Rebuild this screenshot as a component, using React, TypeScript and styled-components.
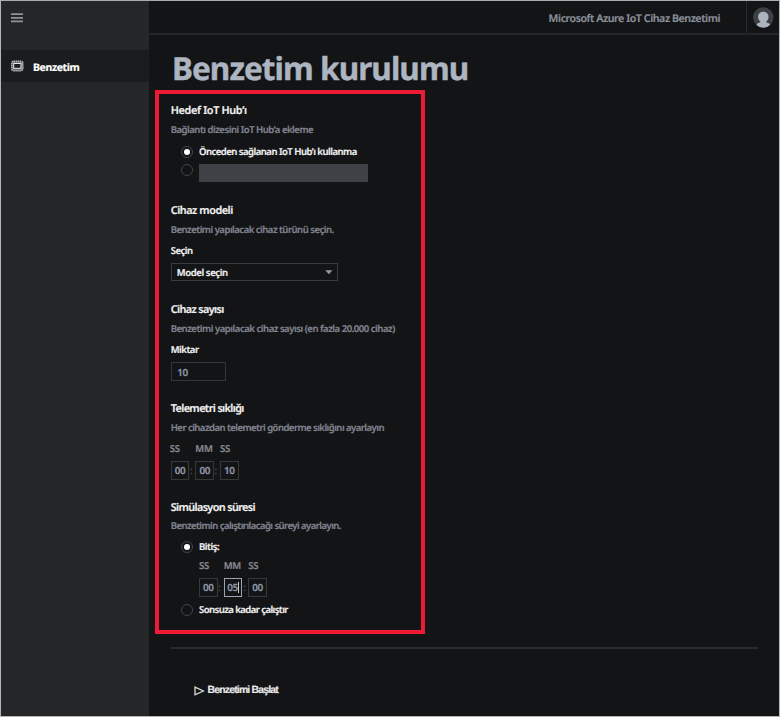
import React from "react";
import styled, { createGlobalStyle } from "styled-components";

const Global = createGlobalStyle`
  * { box-sizing: border-box; }
  body { margin: 0; background: #131416; }
`;

const Shell = styled.div`
  display: grid;
  grid-template-columns: 148px 1fr;
  width: 780px;
  height: 717px;
  border: 1px solid #b4b5b6;
  border-top-color: #a9abac;
  background: #131416;
  color: #f1f1f1;
  font-family: "Noto Sans", "Open Sans", sans-serif;
  font-weight: 600;
  text-rendering: geometricPrecision;
  -webkit-text-stroke: 0.2px currentColor;
  overflow: hidden;
`;

const Sidebar = styled.nav`
  display: flex;
  flex-direction: column;
  background: #252628;
`;

const MenuButton = styled.div`
  height: 49px;
  padding: 12px 0 0 10px;
  svg { display: block; }
`;

const NavItem = styled.div`
  display: flex;
  align-items: center;
  gap: 9px;
  height: 32px;
  padding: 4px 0 0 10px;
  background: #1b1c1e;
  font-size: 10.5px;
  font-weight: 700;
  letter-spacing: -0.38px;
  line-height: 28px;
  color: #fff;
  svg { flex: none; margin-top: -5px; }
`;

const Main = styled.main`
  display: flex;
  flex-direction: column;
  min-width: 0;
`;

const TopBar = styled.header`
  display: flex;
  justify-content: flex-end;
  height: 34px;
  flex: none;
  border-bottom: 2px solid #242527;
`;

const ProductName = styled.div`
  padding: 1px 26px 0 0;
  font-size: 10.6px;
  letter-spacing: -0.41px;
  line-height: 34px;
  color: #8b919b;
  white-space: nowrap;
`;

const Account = styled.div`
  width: 33px;
  padding: 6px 0 0 6px;
  border-left: 1px solid #2b2c2e;
  svg { display: block; }
`;

const Title = styled.h1`
  height: 55px;
  margin: 0;
  padding-left: 23px;
  font-size: 31.5px;
  font-weight: 700;
  letter-spacing: -0.94px;
  line-height: 67px;
  color: #acb5c0;
  -webkit-text-stroke-width: 0.4px;
  white-space: nowrap;
`;

const Frame = styled.div`
  width: 270px;
  height: 544px;
  flex: none;
  margin-left: 6px;
  padding: 8px 0 0 11.7px;
  border: 4px solid #ee1a35;
`;

const Section = styled.section<{ $height: number }>`
  height: ${(p) => p.$height}px;
`;

const Heading = styled.h2<{ $track: number }>`
  margin: 0;
  font-size: 10.8px;
  font-weight: 600;
  line-height: 18px;
  letter-spacing: ${(p) => p.$track}px;
  white-space: nowrap;
`;

const Text = styled.p<{ $track: number; $muted?: boolean; $height?: number }>`
  margin: 0;
  height: ${(p) => p.$height ?? 20}px;
  font-size: 9.5px;
  line-height: ${(p) => p.$height ?? 20}px;
  letter-spacing: ${(p) => p.$track}px;
  color: ${(p) => (p.$muted ? "#80838f" : "#f1f1f1")};
  white-space: nowrap;
`;

const Option = styled.div<{ $height: number }>`
  display: grid;
  grid-template-columns: 12px auto;
  column-gap: 6.1px;
  justify-content: start;
  align-items: center;
  height: ${(p) => p.$height}px;
  padding-left: 10.2px;
`;

const Radio = styled.span<{ $raised?: boolean }>`
  display: grid;
  place-items: center;
  width: 12px;
  height: 12px;
  margin-top: ${(p) => (p.$raised ? -6 : 0)}px;
  border: 1px solid #434548;
  border-radius: 50%;
`;

const Dot = styled.span`
  width: 6px;
  height: 6px;
  border-radius: 50%;
  background: #fff;
`;

const HiddenString = styled.div`
  width: 169px;
  height: 18px;
  background: #3e4145;
`;

const Select = styled.div`
  display: flex;
  align-items: center;
  justify-content: space-between;
  width: 167.6px;
  height: 18px;
  margin-top: 1px;
  padding: 2px 4.5px 0 5px;
  border: 1px solid #3a3b3d;
  svg { margin-top: -2px; }
`;

const Quantity = styled.div`
  width: 55.6px;
  height: 19px;
  margin-top: 1px;
  padding-left: 5.5px;
  border: 1px solid #343537;
  font-size: 9.9px;
  letter-spacing: -0.35px;
  line-height: 18px;
  color: #8f98a8;
`;

const TimeGrid = styled.div<{ $indent: number; $top: number }>`
  display: grid;
  grid-template-columns: repeat(3, 18.65px);
  column-gap: 6px;
  row-gap: 3px;
  margin: ${(p) => p.$top}px 0 0 ${(p) => p.$indent}px;
`;

const Unit = styled.div<{ $shift?: number }>`
  margin-left: ${(p) => p.$shift ?? 0}px;
  font-size: 9.6px;
  letter-spacing: -0.25px;
  line-height: 18px;
  color: #858790;
  white-space: nowrap;
`;

const TimeBox = styled.div<{ $active?: boolean }>`
  display: flex;
  align-items: center;
  justify-content: center;
  height: 19px;
  border: 1px solid ${(p) => (p.$active ? "#98a4b0" : "#37383a")};
  font-size: 9.9px;
  letter-spacing: -0.4px;
  line-height: 17px;
  color: #8f98a8;
  &:not(:last-child)::after {
    content: ":";
    width: 0;
    position: relative;
    left: 4.5px;
    color: #424346;
  }
`;

const Caret = styled.span`
  width: 1px;
  height: 11px;
  background: #c4cbd4;
`;

const Divider = styled.hr`
  width: 587px;
  height: 2px;
  margin: 13px 0 0 21.7px;
  border: 0;
  background: #2a2b2d;
`;

const StartButton = styled.div`
  display: flex;
  align-items: center;
  gap: 2.5px;
  margin: 32px 0 0 45px;
  font-family: "Liberation Sans", Arial, sans-serif;
  font-size: 10.4px;
  font-weight: 700;
  letter-spacing: -0.79px;
  line-height: 20px;
  color: #e8e8e8;
  svg { margin-top: -1px; }
`;

const MenuIcon = () => (
  <svg width="12" height="10" viewBox="0 0 12 10" stroke="#8d9297" strokeWidth="1.8">
    <path d="M0 1.2h12M0 4.8h12M0 8.4h12" />
  </svg>
);

const ChipIcon = () => (
  <svg width="13" height="12" viewBox="0 0 13 12" fill="none">
    <rect x=".9" y="1.3" width="10.8" height="9.2" rx="1.8" stroke="#b9b9b9" strokeWidth="1.8" strokeDasharray="1.5 .5" />
    <rect x="1.6" y="2" width="9.4" height="7.8" rx="1" fill="#777" />
    <rect x="2.7" y="3.5" width="7.2" height="4.8" fill="#1b1c1e" stroke="#e4e4e4" strokeWidth="1" />
  </svg>
);

const AvatarIcon = () => (
  <svg width="21" height="21" viewBox="0 0 21 21">
    <circle cx="10.3" cy="10.5" r="10.2" fill="#3d4044" />
    <path d="M10.3 4.800C7.100 4.800 5.100 7 5.100 9.900c0 2.200 1 3.700 2.300 4.500v.8C5.400 15.600 4 16.500 3.500 18.100a10.200 10.200 0 0 0 13.600 0C16.600 16.500 15.200 15.600 13.200 15.200v-.8c1.300-.8 2.300-2.300 2.300-4.500 0-2.900-2-5.100-5.200-5.100Z" fill="#acb5be" />
  </svg>
);

const PlayIcon = () => (
  <svg width="11" height="10" viewBox="0 0 11 10" fill="none" stroke="#dcdcdc" strokeWidth="1.3">
    <path d="M1 1.2 9.5 5 1 8.8Z" />
  </svg>
);

const ArrowIcon = () => (
  <svg width="8" height="5" viewBox="0 0 8 5">
    <path d="M.3 .2h7.2L3.9 4.2Z" fill="#97999c" />
  </svg>
);

type TimeProps = { values: string[]; active?: number; indent?: number; top: number; unitShift?: number };

const TimeFields = ({ values, active, indent = 0, top, unitShift = 0 }: TimeProps) => (
  <TimeGrid $indent={indent} $top={top}>
    <Unit $shift={unitShift}>SS</Unit>
    <Unit>MM</Unit>
    <Unit>SS</Unit>
    {values.map((value, i) => (
      <TimeBox key={i} $active={i === active}>
        {value}
        {i === active && <Caret />}
      </TimeBox>
    ))}
  </TimeGrid>
);

export default function App() {
  return (
    <>
      <Global />
      <Shell>
        <Sidebar>
          <MenuButton><MenuIcon /></MenuButton>
          <NavItem><ChipIcon />Benzetim</NavItem>
        </Sidebar>
        <Main>
          <TopBar>
            <ProductName>Microsoft Azure IoT Cihaz Benzetimi</ProductName>
            <Account><AvatarIcon /></Account>
          </TopBar>
          <Title>Benzetim kurulumu</Title>
          <Frame>
            <Section $height={100}>
              <Heading $track={-0.32}>Hedef IoT Hub’ı</Heading>
              <Text $track={-0.47} $muted>Bağlantı dizesini IoT Hub’a ekleme</Text>
              <Option $height={23}>
                <Radio><Dot /></Radio>
                <Text $track={-0.5}>Önceden sağlanan IoT Hub’ı kullanma</Text>
              </Option>
              <Option $height={20}>
                <Radio $raised />
                <HiddenString />
              </Option>
            </Section>
            <Section $height={99}>
              <Heading $track={-0.44}>Cihaz modeli</Heading>
              <Text $track={-0.49} $muted>Benzetimi yapılacak cihaz türünü seçin.</Text>
              <Text $track={-0.48} $height={22}>Seçin</Text>
              <Select>
                <Text $track={-0.37}>Model seçin</Text>
                <ArrowIcon />
              </Select>
            </Section>
            <Section $height={99}>
              <Heading $track={-0.6}>Cihaz sayısı</Heading>
              <Text $track={-0.455} $muted>Benzetimi yapılacak cihaz sayısı (en fazla 20.000 cihaz)</Text>
              <Text $track={-0.45} $height={22}>Miktar</Text>
              <Quantity>10</Quantity>
            </Section>
            <Section $height={99}>
              <Heading $track={-0.6}>Telemetri sıklığı</Heading>
              <Text $track={-0.525} $muted $height={19}>Her cihazdan telemetri gönderme sıklığını ayarlayın</Text>
              <TimeFields values={["00", "00", "10"]} top={3} unitShift={-1} />
            </Section>
            <Section $height={130}>
              <Heading $track={-0.61}>Simülasyon süresi</Heading>
              <Text $track={-0.54} $muted $height={17}>Benzetimin çalıştırılacağı süreyi ayarlayın.</Text>
              <Option $height={26}>
                <Radio><Dot /></Radio>
                <Text $track={-0.45}>Bitiş:</Text>
              </Option>
              <TimeFields values={["00", "05", "00"]} active={1} indent={28.3} top={-3} />
              <Option $height={25}>
                <Radio />
                <Text $track={-0.54}>Sonsuza kadar çalıştır</Text>
              </Option>
            </Section>
          </Frame>
          <Divider />
          <StartButton><PlayIcon />Benzetimi Başlat</StartButton>
        </Main>
      </Shell>
    </>
  );
}
